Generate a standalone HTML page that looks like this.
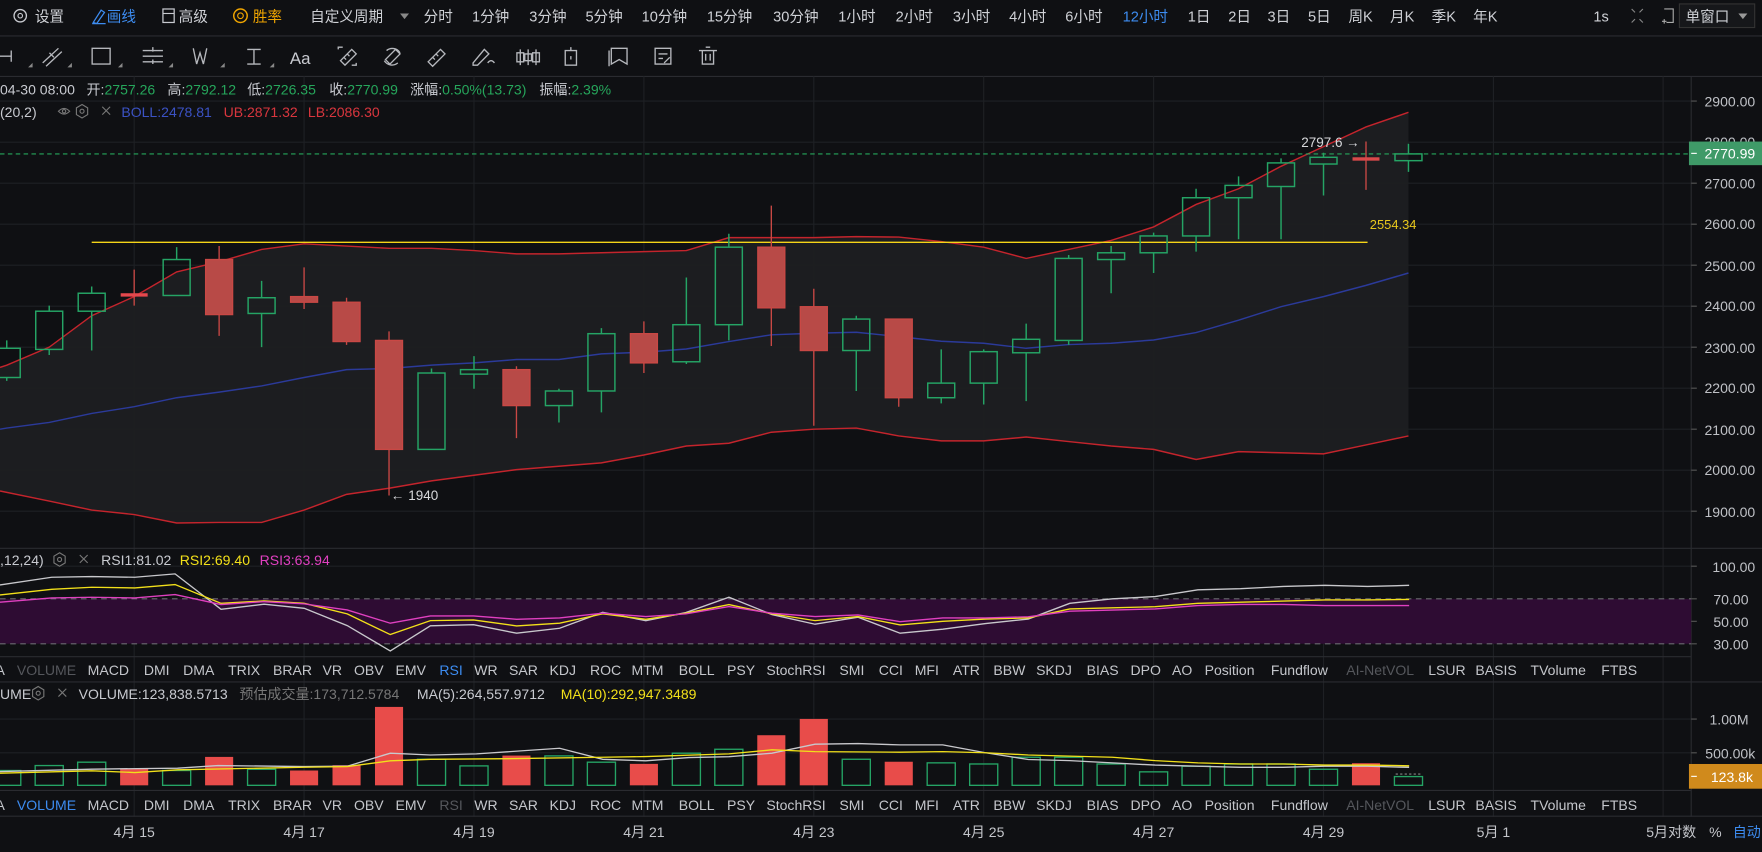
<!DOCTYPE html>
<html><head><meta charset="utf-8">
<style>
html,body{margin:0;padding:0;background:#0f1013;overflow:hidden;width:1762px;height:846px}
#w{position:absolute;left:0;top:0;width:1568px;height:753px;transform:scale(1.12372,1.12351);transform-origin:0 0}
svg text{font-family:"Liberation Sans","Noto Sans CJK SC",sans-serif}
</style></head><body><div id="w">
<svg width="1568" height="753" viewBox="0 0 1568 753" xmlns="http://www.w3.org/2000/svg">
<rect width="1568" height="753" fill="#0f1013"/>
<!-- top bar -->
<g font-size="13" fill="#cfd1d6">
<circle cx="18" cy="14" r="5.5" fill="none" stroke="#c8cad0" stroke-width="1.2"/><circle cx="18" cy="14" r="2" fill="none" stroke="#c8cad0" stroke-width="1"/>
<text x="31" y="19">设置</text>
<path d="M83 20 L90 9 L93 11 L86 21 Z M82 21 h12" fill="none" stroke="#3d8cf0" stroke-width="1.1"/>
<text x="95" y="19" fill="#3d8cf0">画线</text>
<rect x="145" y="8" width="10" height="12" fill="none" stroke="#c8cad0" stroke-width="1.1"/><line x1="145" y1="12" x2="155" y2="12" stroke="#c8cad0"/>
<text x="159" y="19">高级</text>
<circle cx="214" cy="14" r="6" fill="none" stroke="#f0a500" stroke-width="1.3"/><circle cx="214" cy="14" r="2.5" fill="none" stroke="#f0a500"/>
<text x="225" y="19" fill="#f0a500">胜率</text>
<text x="276" y="19">自定义周期</text><path d="M356 12 h8 l-4 5z" fill="#888"/>
<text x="377" y="19">分时</text><text x="420" y="19">1分钟</text><text x="471" y="19">3分钟</text><text x="521" y="19">5分钟</text><text x="571" y="19">10分钟</text><text x="629" y="19">15分钟</text><text x="688" y="19">30分钟</text><text x="746" y="19">1小时</text><text x="797" y="19">2小时</text><text x="848" y="19">3小时</text><text x="898" y="19">4小时</text><text x="948" y="19">6小时</text>
<text x="999" y="19" fill="#3d8cf0">12小时</text>
<text x="1057" y="19">1日</text><text x="1093" y="19">2日</text><text x="1128" y="19">3日</text><text x="1164" y="19">5日</text><text x="1200" y="19">周K</text><text x="1237" y="19">月K</text><text x="1274" y="19">季K</text><text x="1311" y="19">年K</text>
<text x="1418" y="19">1s</text>
<path d="M1452 8 l3 3 M1462 8 l-3 3 M1452 20 l3 -3 M1462 20 l-3 -3" stroke="#888" fill="none"/>
<path d="M1481 8 h8 v12 h-6 M1481 17 v4 M1479 19 h4" stroke="#aaa" fill="none"/>
<rect x="1494.5" y="3.5" width="67" height="21" fill="#16171a" stroke="#333"/>
<text x="1500" y="19">单窗口</text><path d="M1547 12 h8 l-4 5z" fill="#999"/>
</g>
<line x1="0" y1="32" x2="1568" y2="32" stroke="#2a2b30"/>
<!-- toolbar -->
<g fill="none" stroke="#b6b8bd" stroke-width="1.2">
<path d="M0 50 h10 M10 45 v10"/>
<path d="M38 56 l14 -13 M41 59 l14 -13 M44 47 l4 4"/>
<rect x="82" y="43" width="16" height="14"/>
<path d="M127 45 h18 M127 50 h18 M127 55 h18 M136 42 v4 M136 53 v4"/>
<path d="M172 43 l3 14 l3 -10 l3 10 l3 -14"/>
<path d="M220 44 h12 M226 44 v13 M220 57 h12"/>
<path d="M301 44 v-2 h4 M317 56 v2 h-4 M303 54 l10 -10 l4 4 l-10 10z M306 51 l2 2 M309 48 l2 2"/>
<path d="M344 45 a8 8 0 0 1 12 2 M354 56 a8 8 0 0 1 -12 -2 M343 53 l9 -9 l4 4 l-9 9z"/>
<path d="M381 55 l11 -11 l4 4 l-11 11z M385 51 l2 2 M388 48 l2 2"/>
<path d="M421 56 l10 -12 l4 4 l-10 10 h-4z M434 56 q3 -4 6 0"/>
<path d="M463 44 v14 M470 44 v14 M477 44 v14 M460 47 h6 v8 h-6z M467 48 h6 v6 h-6z M474 47 h6 v8 h-6z"/>
<rect x="503" y="45" width="10" height="13"/><path d="M508 42 v3 M508 50 v3"/>
<path d="M544 43 h14 v14 l-7 -4 l-7 4z M542 45 v14"/>
<path d="M583 43 h14 v14 h-14z M586 48 h8 M586 52 h4 M591 56 l5 -5"/>
<path d="M622 45 h16 M625 45 v12 h10 v-12 M628 42 h4 M628 48 v6 M632 48 v6"/>
</g>
<g fill="#888"><path d="M25 60 l4 -4 v4z M60 60 l4 -4 v4z M105 60 l4 -4 v4z M150 60 l4 -4 v4z M196 60 l4 -4 v4z M240 60 l4 -4 v4z"/></g>
<text x="258" y="57" font-size="15" fill="#c8cad0">Aa</text>
<line x1="0" y1="68" x2="1568" y2="68" stroke="#2a2b30"/>
<!-- grid -->
<g stroke="#1e2024" stroke-width="1">
<path d="M119.4 68 V727 M270.6 68 V727 M421.8 68 V727 M573 68 V727 M724.2 68 V727 M875.4 68 V727 M1026.6 68 V727 M1177.8 68 V727 M1329 68 V727 M1480 68 V727"/>
<path d="M0 90 H1505 M0 126.6 H1505 M0 163 H1505 M0 199.5 H1505 M0 236 H1505 M0 272.5 H1505 M0 309 H1505 M0 345.5 H1505 M0 382 H1505 M0 418.5 H1505 M0 455 H1505"/>
<path d="M0 504 H1505 M0 553 H1505 M0 640 H1505 M0 670 H1505"/>
</g>
<!-- band -->
<polygon fill="#1e1f21" fill-opacity="0.95" points="0,327 6,325 43.8,309 81.6,281 119.4,264 157.2,242 195,233 232.8,222 270.6,217 308.4,219 346.2,221 384,221 421.8,223 459.6,226 497.4,226 535.2,225 573,224 610.8,223 648.6,211.5 686.4,211.5 724.2,211.5 762,210.6 799.8,211 837.6,215 875.4,220 913.2,230 951,222 988.8,214 1026.6,202 1064.4,182 1102.2,168 1140,148 1177.8,130.5 1215.6,113 1253.4,100 1253.4,388 1215.6,396 1177.8,404 1140,403 1102.2,402 1064.4,409 1026.6,400 988.8,397 951,393 913.2,389 875.4,392.4 837.6,392.4 799.8,388 762,381 724.2,382 686.4,384.7 648.6,394.5 610.8,397 573,405 535.2,412 497.4,415 459.6,418 421.8,423 384,428 346.2,434.6 308.4,440 270.6,454 232.8,465 195,465 157.2,465.5 119.4,458 81.6,454 43.8,446 0,437"/>
<g fill="none" stroke-width="1.3">
<polyline stroke="#c4242c" points="0,327 6,325 43.8,309 81.6,281 119.4,264 157.2,242 195,233 232.8,222 270.6,217 308.4,219 346.2,221 384,221 421.8,223 459.6,226 497.4,226 535.2,225 573,224 610.8,223 648.6,211.5 686.4,211.5 724.2,211.5 762,210.6 799.8,211 837.6,215 875.4,220 913.2,230 951,222 988.8,214 1026.6,202 1064.4,182 1102.2,168 1140,148 1177.8,130.5 1215.6,113 1253.4,100"/>
<polyline stroke="#c4242c" points="0,437 43.8,446 81.6,454 119.4,458 157.2,465.5 195,465 232.8,465 270.6,454 308.4,440 346.2,434.6 384,428 421.8,423 459.6,418 497.4,415 535.2,412 573,405 610.8,397 648.6,394.5 686.4,384.7 724.2,382 762,381 799.8,388 837.6,392.4 875.4,392.4 913.2,389 951,393 988.8,397 1026.6,400 1064.4,409 1102.2,402 1140,403 1177.8,404 1215.6,396 1253.4,388"/>
<polyline stroke="#2b3a9a" points="0,382 6,381 43.8,376 81.6,368 119.4,362 157.2,354 195,349 232.8,343.5 270.6,336 308.4,329 346.2,328 384,325 421.8,323 459.6,320 497.4,320 535.2,315 573,313.5 610.8,310.6 648.6,304 686.4,298 724.2,296.6 762,295.7 799.8,299.6 837.6,303.7 875.4,305.5 913.2,310 951,306.7 988.8,305.5 1026.6,302.6 1064.4,296 1102.2,285 1140,273 1177.8,264 1215.6,254 1253.4,243"/>
</g>
<line x1="81.6" y1="215.7" x2="1217" y2="215.7" stroke="#f5d418" stroke-width="1.2"/>
<text x="1219" y="204" font-size="11.5" fill="#e8c81c" font-family="Liberation Mono,monospace">2554.34</text>
<!-- candles -->
<g stroke-width="1.3">
<g stroke="#25a465" fill="none">
<path d="M6 303V310M6 336V339M43.8 272V277M43.8 311V316M81.6 255V261M81.6 277V312M157.2 220V231M232.8 250V265M232.8 279V309M384 328V332M421.8 317V329M421.8 333V346M497.4 346V348M497.4 361V376M535.2 292V297M535.2 348V367M610.8 247V289M610.8 322V324M648.6 208V220M648.6 289V303M762 281V284M762 312V348M837.6 311V341M837.6 354V359M875.4 311V313M875.4 341V360M913.2 288V302M913.2 314V357M951 227V230M951 303V307M988.8 219V225M988.8 231V261M1026.6 207V210M1026.6 225V243M1064.4 168V176M1064.4 210V224M1102.2 157V165M1102.2 176V213M1140 141V145M1140 166V213M1177.8 136V140M1177.8 146V174M1253.4 128V137M1253.4 143V153"/>
<rect x="-6" y="310" width="24" height="26"/><rect x="31.8" y="277" width="24" height="34"/><rect x="69.6" y="261" width="24" height="16"/><rect x="145.2" y="231" width="24" height="32"/><rect x="220.8" y="265" width="24" height="14"/><rect x="372" y="332" width="24" height="68"/><rect x="409.8" y="329" width="24" height="4"/><rect x="485.4" y="348" width="24" height="13"/><rect x="523.2" y="297" width="24" height="51"/><rect x="598.8" y="289" width="24" height="33"/><rect x="636.6" y="220" width="24" height="69"/><rect x="750" y="284" width="24" height="28"/><rect x="825.6" y="341" width="24" height="13"/><rect x="863.4" y="313" width="24" height="28"/><rect x="901.2" y="302" width="24" height="12"/><rect x="939" y="230" width="24" height="73"/><rect x="976.8" y="225" width="24" height="6"/><rect x="1014.6" y="210" width="24" height="15"/><rect x="1052.4" y="176" width="24" height="34"/><rect x="1090.2" y="165" width="24" height="11"/><rect x="1128" y="145" width="24" height="21"/><rect x="1165.8" y="140" width="24" height="6"/><rect x="1241.4" y="137" width="24" height="6"/>
</g>
<g stroke="#c94845" fill="#b84a47" stroke-width="1.2">
<path d="M119.4 240V272M195 219V299M270.6 238V275M308.4 265V307M346.2 295V441M459.6 326V390M573 286V332M686.4 183V308M724.2 257V379M799.8 284V362M1215.6 126V169"/>
<rect x="107.4" y="261" width="24" height="3" fill="#e5484d" stroke="none"/><rect x="183" y="231" width="24" height="49"/><rect x="258.6" y="264" width="24" height="5"/><rect x="296.4" y="269" width="24" height="35"/><rect x="334.2" y="303" width="24" height="97"/><rect x="447.6" y="329" width="24" height="32"/><rect x="561" y="297" width="24" height="26"/><rect x="674.4" y="220" width="24" height="54"/><rect x="712.2" y="273" width="24" height="39"/><rect x="787.8" y="284" width="24" height="70"/><rect x="1203.6" y="140" width="24" height="3" fill="#d9494a" stroke="none"/>
</g>
</g>
<line x1="0" y1="137" x2="1505" y2="137" stroke="#26a65b" stroke-width="1" stroke-dasharray="4,3"/>
<g font-size="12" fill="#d8d9dc">
<text x="1158" y="131">2797.6 →</text>
<text x="348" y="445">← 1940</text>
</g>
<!-- info rows -->
<g font-size="12.5" fill="#c8cad0">
<text x="0" y="84">04-30 08:00</text>
<text x="77" y="84">开:<tspan fill="#26a65b">2757.26</tspan></text>
<text x="149" y="84">高:<tspan fill="#26a65b">2792.12</tspan></text>
<text x="220" y="84">低:<tspan fill="#26a65b">2726.35</tspan></text>
<text x="293" y="84">收:<tspan fill="#26a65b">2770.99</tspan></text>
<text x="365" y="84">涨幅:<tspan fill="#26a65b">0.50%(13.73)</tspan></text>
<text x="480" y="84">振幅:<tspan fill="#26a65b">2.39%</tspan></text>
<text x="0" y="104">(20,2)</text>
<text x="108" y="104" fill="#3b52c4">BOLL:2478.81</text>
<text x="199" y="104" fill="#d9363e">UB:2871.32</text>
<text x="274" y="104" fill="#d9363e">LB:2086.30</text>
<text x="0" y="503">,12,24)</text>
<text x="90" y="503">RSI1:81.02</text>
<text x="160" y="503" fill="#f2e01a">RSI2:69.40</text>
<text x="231" y="503" fill="#e040c0">RSI3:63.94</text>
<text x="0" y="622">UME</text>
<text x="70" y="622">VOLUME:123,838.5713</text>
<text x="213" y="622" fill="#777">预估成交量:173,712.5784</text>
<text x="371" y="622">MA(5):264,557.9712</text>
<text x="499" y="622" fill="#f2e01a">MA(10):292,947.3489</text>
</g>
<g fill="none" stroke="#777" stroke-width="1">
<path d="M52 99 q5 -5 10 0 q-5 5 -10 0z"/><circle cx="57" cy="99" r="1.5"/>
<path d="M73 93 l5 3 v6 l-5 3 l-5 -3 v-6z"/><circle cx="73" cy="99" r="1.8"/>
<path d="M91 95 l7 7 M98 95 l-7 7"/>
<path d="M53 492 l5 3 v6 l-5 3 l-5 -3 v-6z"/><circle cx="53" cy="498" r="1.8"/>
<path d="M71 494 l7 7 M78 494 l-7 7"/>
<path d="M34 611 l5 3 v6 l-5 3 l-5 -3 v-6z"/><circle cx="34" cy="617" r="1.8"/>
<path d="M52 613 l7 7 M59 613 l-7 7"/>
</g>
<!-- separators -->
<g stroke="#2a2b30">
<line x1="0" y1="488" x2="1568" y2="488"/>
<line x1="0" y1="584.5" x2="1505" y2="584.5"/>
<line x1="0" y1="607" x2="1568" y2="607"/>
<line x1="0" y1="703.5" x2="1505" y2="703.5"/>
<line x1="0" y1="726.5" x2="1568" y2="726.5"/>
<line x1="1505" y1="68" x2="1505" y2="727"/>
</g>
<!-- RSI -->
<rect x="0" y="533" width="1505" height="40" fill="#2e0c33"/>
<g stroke="#6a6a70" stroke-dasharray="5,4"><line x1="0" y1="533" x2="1505" y2="533"/><line x1="0" y1="573" x2="1505" y2="573"/></g>
<g fill="none" stroke-width="1.2">
<polyline stroke="#c8c8cc" points="0,520.6 46,513.8 81.7,513.2 120,513.8 155.8,510.8 196.7,542.3 235,537.8 270.7,541.4 309,556.8 347.3,579.4 383,557 421.4,556 459.7,563.6 498,559.2 536.3,545 574.7,552.4 610.4,545.2 648.7,531.6 687,547 725.3,555.6 763.6,549.4 801,563.6 839,560 877,555 915,551 952,537 990,533 1028,531 1066,525 1104,524 1142,522 1179,521 1217,522 1254,521"/>
<polyline stroke="#f2e01a" points="0,529.5 46,524.5 81.7,522.7 120,523.3 155.8,520.3 196.7,537 235,534.9 270.7,537 309,546.4 347.3,564.8 383,552.4 421.4,551.8 459.7,557.1 498,554.7 536.3,546.4 574.7,551.2 610.4,545.8 648.7,538.1 687,546.4 725.3,552.4 763.6,548.8 801,556.2 839,553 877,551 915,550 952,542 990,541 1028,540 1066,537 1104,536 1142,535 1179,534 1217,534 1254,533.5"/>
<polyline stroke="#e040c0" points="0,536 46,532.2 81.7,531.6 120,532.2 155.8,529.2 196.7,538.1 235,535.5 270.7,537.5 309,542.9 347.3,554.7 383,548.2 421.4,548.2 459.7,551.2 498,550 536.3,545.8 574.7,548.8 610.4,546.4 648.7,539.9 687,545.8 725.3,548.8 763.6,547.3 801,553.3 839,550 877,550 915,549 952,544 990,543 1028,542 1066,539 1104,538 1142,538 1179,539 1217,539 1254,539"/>
</g>
<!-- Volume bars -->
<g stroke="#25a465" fill="none" stroke-width="1.2">
<rect x="-6.5" y="685.8" width="25" height="13.2"/><rect x="31.3" y="681.4" width="25" height="17.6"/><rect x="69.1" y="678.4" width="25" height="20.6"/><rect x="144.7" y="685.8" width="25" height="13.2"/><rect x="220.3" y="684.7" width="25" height="14.3"/><rect x="371.5" y="675.8" width="25" height="23.2"/><rect x="409.3" y="681.7" width="25" height="17.3"/><rect x="484.9" y="672.8" width="25" height="26.2"/><rect x="522.7" y="678.4" width="25" height="20.6"/><rect x="598.3" y="670.4" width="25" height="28.6"/><rect x="636.1" y="666.9" width="25" height="32.1"/><rect x="749.5" y="675.8" width="25" height="23.2"/><rect x="825.1" y="679" width="25" height="20"/><rect x="862.9" y="680" width="25" height="19"/><rect x="900.7" y="674" width="25" height="25"/><rect x="938.5" y="674" width="25" height="25"/><rect x="976.3" y="680" width="25" height="19"/><rect x="1014.1" y="687" width="25" height="12"/><rect x="1051.9" y="682" width="25" height="17"/><rect x="1089.7" y="680" width="25" height="19"/><rect x="1127.5" y="680" width="25" height="19"/><rect x="1165.3" y="684.7" width="25" height="14.3"/><rect x="1240.9" y="691.2" width="25" height="7.8"/>
</g>
<line x1="1242" y1="689" x2="1266" y2="689" stroke="#888" stroke-dasharray="2,2"/>
<g fill="#e84c4a">
<rect x="106.9" y="684.4" width="25" height="14.6"/><rect x="182.5" y="673.7" width="25" height="25.3"/><rect x="258.1" y="685.8" width="25" height="13.2"/><rect x="295.9" y="681.1" width="25" height="17.9"/><rect x="333.7" y="629.2" width="25" height="69.8"/><rect x="447.1" y="672.5" width="25" height="26.5"/><rect x="560.5" y="679.9" width="25" height="19.1"/><rect x="673.9" y="654.4" width="25" height="44.6"/><rect x="711.7" y="639.9" width="25" height="59.1"/><rect x="787.3" y="678" width="25" height="21"/><rect x="1203.1" y="679.3" width="25" height="19.7"/>
</g>
<g fill="none" stroke-width="1.2">
<polyline stroke="#c8c8cc" points="0,686.7 81.7,684.6 158,683.7 194,681.4 270.7,682.3 309,682 347.3,670.4 383,672 424,671 498,666 536.3,675.8 574.7,677.2 613,674.3 648.7,673.5 687,670.4 725.3,662.4 763.6,661.8 801,663 839,663 877,670 915,676 952,677 990,679 1028,681 1066,682 1104,683 1142,683 1179,682 1217,682 1254,683"/>
<polyline stroke="#f2e01a" points="0,688.2 81.7,686.1 120,687.6 158,685.2 270.7,682.9 309,682.3 347.3,677.2 383,675.8 459.7,675.2 536.3,674 574.7,673.4 648.7,671 687,667.4 725.3,669 801,669.5 839,669 877,670 915,672 952,673 990,674 1028,677 1066,679 1104,680 1142,680 1179,681 1217,681 1254,681.6"/>
</g>
<!-- price axis -->
<g font-size="12.5" fill="#bfc1c6" text-anchor="end">
<text x="1562" y="95">2900.00</text><text x="1562" y="131">2800.00</text><text x="1562" y="168">2700.00</text><text x="1562" y="204">2600.00</text><text x="1562" y="241">2500.00</text><text x="1562" y="277">2400.00</text><text x="1562" y="314">2300.00</text><text x="1562" y="350">2200.00</text><text x="1562" y="387">2100.00</text><text x="1562" y="423">2000.00</text><text x="1562" y="460">1900.00</text>
<text x="1562" y="509">100.00</text><text x="1556" y="538">70.00</text><text x="1556" y="558">50.00</text><text x="1556" y="578">30.00</text>
<text x="1556" y="645">1.00M</text><text x="1562" y="675">500.00k</text>
</g>
<g stroke="#555"><path d="M1505 90h5M1505 163h5M1505 199.5h5M1505 236h5M1505 272.5h5M1505 309h5M1505 345.5h5M1505 382h5M1505 418.5h5M1505 455h5M1505 504h5M1505 533h5M1505 553h5M1505 573h5M1505 640h5M1505 670h5"/></g>
<rect x="1503" y="126" width="65" height="21" fill="#3f9a68"/>
<text x="1562" y="141" font-size="12.5" fill="#fff" text-anchor="end">2770.99</text>
<line x1="1505" y1="136.5" x2="1510" y2="136.5" stroke="#fff"/>
<rect x="1503" y="680" width="65" height="22" fill="#d08a1c"/>
<text x="1560" y="696" font-size="12.5" fill="#fff" text-anchor="end">123.8k</text>
<line x1="1505" y1="691" x2="1510" y2="691" stroke="#fff"/>
<!-- tabs -->
<g font-size="12.5" fill="#c4c6cb">
<g transform="translate(0,601)">
<text x="-4">A</text><text x="15" fill="#55575c">VOLUME</text><text x="78">MACD</text><text x="128">DMI</text><text x="163">DMA</text><text x="203">TRIX</text><text x="243">BRAR</text><text x="287">VR</text><text x="315">OBV</text><text x="352">EMV</text><text x="391" fill="#3d8cf0">RSI</text><text x="422">WR</text><text x="453">SAR</text><text x="489">KDJ</text><text x="525">ROC</text><text x="562">MTM</text><text x="604">BOLL</text><text x="647">PSY</text><text x="682">StochRSI</text><text x="747">SMI</text><text x="782">CCI</text><text x="814">MFI</text><text x="848">ATR</text><text x="884">BBW</text><text x="922">SKDJ</text><text x="967">BIAS</text><text x="1006">DPO</text><text x="1043">AO</text><text x="1072">Position</text><text x="1131">Fundflow</text><text x="1198" fill="#55575c">AI-NetVOL</text><text x="1271">LSUR</text><text x="1313">BASIS</text><text x="1362">TVolume</text><text x="1425">FTBS</text>
</g>
<g transform="translate(0,721)">
<text x="-4">A</text><text x="15" fill="#3d8cf0">VOLUME</text><text x="78">MACD</text><text x="128">DMI</text><text x="163">DMA</text><text x="203">TRIX</text><text x="243">BRAR</text><text x="287">VR</text><text x="315">OBV</text><text x="352">EMV</text><text x="391" fill="#55575c">RSI</text><text x="422">WR</text><text x="453">SAR</text><text x="489">KDJ</text><text x="525">ROC</text><text x="562">MTM</text><text x="604">BOLL</text><text x="647">PSY</text><text x="682">StochRSI</text><text x="747">SMI</text><text x="782">CCI</text><text x="814">MFI</text><text x="848">ATR</text><text x="884">BBW</text><text x="922">SKDJ</text><text x="967">BIAS</text><text x="1006">DPO</text><text x="1043">AO</text><text x="1072">Position</text><text x="1131">Fundflow</text><text x="1198" fill="#55575c">AI-NetVOL</text><text x="1271">LSUR</text><text x="1313">BASIS</text><text x="1362">TVolume</text><text x="1425">FTBS</text>
</g>
</g>
<!-- dates -->
<g font-size="12.5" fill="#c4c6cb" text-anchor="middle">
<text x="119.4" y="745">4月 15</text><text x="270.6" y="745">4月 17</text><text x="421.8" y="745">4月 19</text><text x="573" y="745">4月 21</text><text x="724.2" y="745">4月 23</text><text x="875.4" y="745">4月 25</text><text x="1026.6" y="745">4月 27</text><text x="1177.8" y="745">4月 29</text><text x="1329" y="745">5月 1</text>
</g>
<g font-size="12.5" fill="#c4c6cb"><text x="1465" y="745">5月对数</text><text x="1521" y="745">%</text><text x="1542" y="745" fill="#3d8cf0">自动</text></g>
</svg>
</div></body></html>
